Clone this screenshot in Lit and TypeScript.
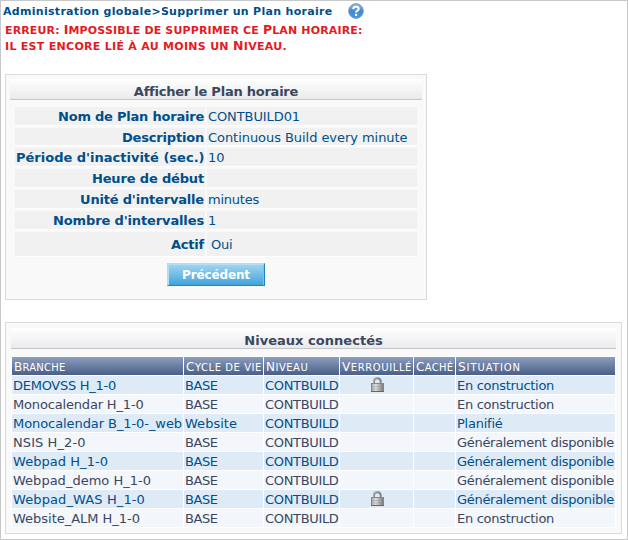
import { LitElement, html, css } from "lit";
import { customElement } from "lit/decorators.js";
import { styleMap } from "lit/directives/style-map.js";

const REGULAR = '13px "DejaVu Sans"';
const BOLD = 'bold 13px "DejaVu Sans"';

const ctx = document.createElement("canvas").getContext("2d")!;

// Sets a text in a given width by spreading the difference over its letters.
const fit = (s: string, width: number, font = REGULAR) => {
  ctx.font = font;
  const gap = s ? (width - ctx.measureText(s).width) / s.length : 0;
  return html`<span style=${styleMap({ letterSpacing: `${gap.toFixed(3)}px` })}>${s}</span>`;
};

const fields: [string, number, string, number][] = [
  ["Nom de Plan horaire", 146, "CONTBUILD01", 92],
  ["Description", 82, "Continuous Build every minute", 199.5],
  ["Période d'inactivité (sec.)", 188.5, "10", 16.5],
  ["Heure de début", 112, "", 0],
  ["Unité d'intervalle", 124, "minutes", 51],
  ["Nombre d'intervalles", 151, "1", 8],
  ["Actif", 33, "Oui", 21.5],
];

const columns: [string, string][] = [
  ["Branche", "c0"],
  ["Cycle de vie", "c1"],
  ["Niveau", "c2"],
  ["Verrouillé", "c3"],
  ["Caché", "c4"],
  ["Situation", "c5"],
];

const textWidths: Record<string, number> = {
  "DEMOVSS H_1-0": 103,
  "Monocalendar H_1-0": 130.5,
  "Monocalendar B_1-0-_web": 169,
  "NSIS H_2-0": 72.5,
  "Webpad H_1-0": 95,
  "Webpad_demo H_1-0": 138,
  "Webpad_WAS H_1-0": 132,
  "Website_ALM H_1-0": 127,
  BASE: 32.5,
  Website: 52,
  CONTBUILD: 73.5,
  "En construction": 97,
  "Planifié": 45.5,
  "Généralement disponible": 157,
};

const levels: [string, string, string, boolean, string][] = [
  ["DEMOVSS H_1-0", "BASE", "CONTBUILD", true, "En construction"],
  ["Monocalendar H_1-0", "BASE", "CONTBUILD", false, "En construction"],
  ["Monocalendar B_1-0-_web", "Website", "CONTBUILD", false, "Planifié"],
  ["NSIS H_2-0", "BASE", "CONTBUILD", false, "Généralement disponible"],
  ["Webpad H_1-0", "BASE", "CONTBUILD", false, "Généralement disponible"],
  ["Webpad_demo H_1-0", "BASE", "CONTBUILD", false, "Généralement disponible"],
  ["Webpad_WAS H_1-0", "BASE", "CONTBUILD", true, "Généralement disponible"],
  ["Website_ALM H_1-0", "BASE", "CONTBUILD", false, "En construction"],
];

// Enlarges the capitals of a string whose other letters are set as small capitals.
const caps = (s: string) =>
  s.split(/([A-Z])/).map((p) => (/^[A-Z]$/.test(p) ? html`<span class="cap">${p}</span>` : p));

const lock = html`<svg class="lock" width="13" height="15" viewBox="0 0 13 15">
  <defs><linearGradient id="m" x1="0" y1="0" x2="1" y2="0">
    <stop offset="0" stop-color="#a8a8a8"/><stop offset=".35" stop-color="#dedede"/><stop offset="1" stop-color="#777"/>
  </linearGradient></defs>
  <path d="M3 8V4.2Q3 1.2 6.3 1.2T9.7 4.2V8" fill="none" stroke="#858585" stroke-width="2"/>
  <path d="M2.6 7V4Q3 .9 6 .8" fill="none" stroke="#c4c4c4" stroke-width=".8"/>
  <rect x=".5" y="6.5" width="12" height="8" fill="url(#m)" stroke="#868686"/>
  <path d="M1 9.5h11M1 12h11" stroke="#8d8d8d" stroke-width=".4"/>
  <path d="M0 14.5h13" stroke="#666"/>
</svg>`;

const help = html`<svg class="help" width="16" height="16" viewBox="0 0 16 16">
  <defs><linearGradient id="h" x1="0" y1="0" x2="0" y2="1">
    <stop offset="0" stop-color="#8dbce6"/><stop offset=".5" stop-color="#4389cf"/><stop offset="1" stop-color="#3f9be2"/>
  </linearGradient></defs>
  <circle cx="8" cy="8" r="7.4" fill="url(#h)" stroke="#7b9fc2" stroke-width=".9"/>
  <path d="M5.2 6.1Q5.3 3.7 8 3.7T10.7 5.9Q10.7 7 9.2 7.8Q8.1 8.4 8.1 9.6" fill="none" stroke="#fff" stroke-width="2.1"/>
  <rect x="7" y="10.8" width="2.2" height="2.2" fill="#fff"/>
</svg>`;

@customElement("app-root")
export class AppRoot extends LitElement {
  static styles = css`
    :host { display: block; font: 13px/18px "DejaVu Sans", Verdana, sans-serif; color: #004f8a; }
    .page { box-sizing: border-box; width: 628px; height: 540px; border: 1px solid #c8c8c8; background: #fff; overflow: hidden; padding-left: 4px; white-space: nowrap; }
    .crumbs { display: flex; height: 20px; margin-left: -2px; font: bold 11px/22px "DejaVu Sans", sans-serif; }
    .crumbs .t { width: 345px; }
    .help { margin-top: 2px; }
    .error { height: 32px; margin-top: 2px; font: bold 11px/16px "DejaVu Sans", sans-serif; color: #e31b23; text-transform: uppercase; }
    .error .cap { font-size: 12.5px; line-height: 10px; }
    .e1 { letter-spacing: .14px; }
    .e2 { letter-spacing: .29px; }
    .panel { box-sizing: border-box; border: 1px solid #dadada; background: #f9f9f9; }
    .first { width: 422px; height: 226px; margin-top: 19px; padding: 4px; }
    .second { width: 617px; height: 212px; margin-top: 22px; padding: 5px; }
    .title { box-sizing: border-box; height: 21px; border-bottom: 1px solid #c6c6c9; background: linear-gradient(#fff, #e9eaec); text-align: center; font-weight: bold; line-height: 26px; color: #3a475e; }
    .fields { display: grid; grid-template-columns: 190px 210px; grid-template-rows: 19px 18px 19px 19px 19px 19px 25px; gap: 2px; margin: 7px 5px 0; }
    .fields div { border-bottom: 1px solid #fff; background: #f1f1f1; line-height: 20px; padding: 0 1px; }
    .fields .name { text-align: right; font-weight: bold; }
    .fields .tall { line-height: 25px; }
    .fields .val.tall { padding-left: 4px; }
    button { display: block; box-sizing: border-box; width: 98px; height: 23px; margin: 6px 0 0 157px; padding: 0; border: 1px solid; border-color: #a9e0f3 #1d84bf #1d84bf #a9e0f3; box-shadow: inset 1px 1px #b1e0f5, inset -1px 0 #83bfe8; background: linear-gradient(#a3d5f2, #43a4db); font: bold 12px/20px "DejaVu Sans", sans-serif; letter-spacing: -.15px; color: #fff; }
    .levels { display: grid; grid-template-columns: 171px 79px 75px 73px 41px 159px; grid-auto-rows: 18px; gap: 1px; margin: 7px 0 0; padding: 1px; background: #fff; width: 603px; }
    .levels div { padding: 0 0 0 1px; line-height: 20px; height: 18px; }
    .levels .head { padding-left: 2px; background: linear-gradient(#8c9ebe, #4b5f87); color: #fff; font-size: 10px; line-height: 21px; text-transform: uppercase; }
    .head .cap { font-size: 12px; line-height: 10px; }
    .c0 { letter-spacing: .25px; }
    .c1 { letter-spacing: .55px; }
    .c2 { letter-spacing: .5px; }
    .c3 { letter-spacing: .6px; }
    .c4 { letter-spacing: .3px; }
    .c5 { letter-spacing: .95px; }
    .odd { background: #deebf6; color: #004f8a; }
    .even { background: #f3f6fb; color: #3a475e; }
    .levels .icon { display: flex; justify-content: center; }
    .lock { margin-top: 1px; }
  `;

  render() {
    return html`<div class="page">
      <div class="crumbs"><span class="t">${fit("Administration globale>Supprimer un Plan horaire", 329.5, 'bold 11px "DejaVu Sans"')}</span>${help}</div>
      <div class="error">
        <div class="e1">${caps("erreur: Impossible de supprimer ce Plan horaire:")}</div>
        <div class="e2">${caps("il est encore lié à au moins un Niveau.")}</div>
      </div>
      <section class="panel first">
        <div class="title">${fit("Afficher le Plan horaire", 163, BOLD)}</div>
        <div class="fields">
          ${fields.map(([n, nw, v, vw], i) => {
            const k = i === 6 ? "tall" : "";
            return html`<div class="name ${k}">${fit(n, nw, BOLD)}</div><div class="val ${k}">${fit(v, vw)}</div>`;
          })}
        </div>
        <button>Précédent</button>
      </section>
      <section class="panel second">
        <div class="title">${fit("Niveaux connectés", 138.5, BOLD)}</div>
        <div class="levels">
          ${columns.map(([c, k]) => html`<div class="head ${k}">${caps(c)}</div>`)}
          ${levels.map(([a, b, c, l, s], i) => {
            const k = i % 2 ? "even" : "odd";
            const cell = (t: string) => html`<div class=${k}>${fit(t, textWidths[t])}</div>`;
            return html`${cell(a)}${cell(b)}${cell(c)}<div class="icon ${k}">${l ? lock : ""}</div><div class=${k}></div>${cell(s)}`;
          })}
        </div>
      </section>
    </div>`;
  }
}
